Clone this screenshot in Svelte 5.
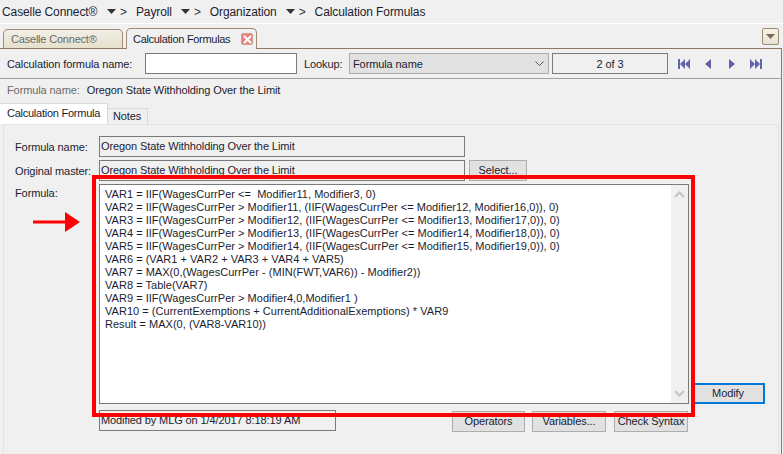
<script>
  const crumbs = ['Caselle Connect®', 'Payroll', 'Organization'];
  const formula = [
    'VAR1 = IIF(WagesCurrPer <=  Modifier11, Modifier3, 0)',
    'VAR2 = IIF(WagesCurrPer > Modifier11, (IIF(WagesCurrPer <= Modifier12, Modifier16,0)), 0)',
    'VAR3 = IIF(WagesCurrPer > Modifier12, (IIF(WagesCurrPer <= Modifier13, Modifier17,0)), 0)',
    'VAR4 = IIF(WagesCurrPer > Modifier13, (IIF(WagesCurrPer <= Modifier14, Modifier18,0)), 0)',
    'VAR5 = IIF(WagesCurrPer > Modifier14, (IIF(WagesCurrPer <= Modifier15, Modifier19,0)), 0)',
    'VAR6 = (VAR1 + VAR2 + VAR3 + VAR4 + VAR5)',
    'VAR7 = MAX(0,(WagesCurrPer - (MIN(FWT,VAR6)) - Modifier2))',
    'VAR8 = Table(VAR7)',
    'VAR9 = IIF(WagesCurrPer > Modifier4,0,Modifier1 )',
    'VAR10 = (CurrentExemptions + CurrentAdditionalExemptions) * VAR9',
    'Result = MAX(0, (VAR8-VAR10))'
  ];
</script>

<div class="app">
  <div class="crumbs">
    {#each crumbs as c}
      <span class="crumb">{c}</span>
      <svg class="drop" width="9" height="5" viewBox="0 0 9 5"><path d="M0 0h9L4.500 5z" fill="#333" /></svg>
      <span class="sep">&gt;</span>
    {/each}
    <span class="crumb">Calculation Formulas</span>
  </div>

  <div class="tabstrip">
    <div class="tab">Caselle Connect®</div>
    <div class="tab active">
      Calculation Formulas
      <span class="close">
        <svg width="9" height="9" viewBox="0 0 9 9"><path d="M1 1l7 7M8 1l-7 7" stroke="#fff" stroke-width="2" /></svg>
      </span>
    </div>
    <div class="tabmenu">
      <svg width="9" height="5" viewBox="0 0 9 5"><path d="M0 0h9L4.500 5z" fill="#7a6a58" /></svg>
    </div>
  </div>

  <div class="pane">
    <div class="toolbar">
      <span class="tb-label">Calculation formula name:</span>
      <div class="tb-input"></div>
      <span class="tb-lookup">Lookup:</span>
      <div class="select">
        Formula name
        <svg width="9" height="5" viewBox="0 0 9 5"><path d="M.5.500l4 4 4-4" fill="none" stroke="#555" /></svg>
      </div>
      <div class="count">2 of 3</div>
      <div class="nav">
        <svg width="12" height="10" viewBox="0 0 12 10"><path d="M0 0h2v10H0zM7 0v10L2 5zM12 0v10L7 5z" fill="#6464ac" /></svg>
        <svg class="prev" width="6" height="10" viewBox="0 0 6 10"><path d="M6 0v10L0 5z" fill="#6464ac" /></svg>
        <svg class="next" width="6" height="10" viewBox="0 0 6 10"><path d="M0 0v10l6-5z" fill="#6464ac" /></svg>
        <svg class="last" width="12" height="10" viewBox="0 0 12 10"><path d="M12 0h-2v10h2zM5 0v10l5-5zM0 0v10l5-5z" fill="#6464ac" /></svg>
      </div>
    </div>

    <div class="titleline"><span class="dim">Formula name:</span><span>Oregon State Withholding Over the Limit</span></div>

    <div class="subtabs">
      <div class="subtab active">Calculation Formula</div>
      <div class="subtab">Notes</div>
    </div>

    <div class="panel">
      <div class="row">
        <span class="label">Formula name:</span>
        <div class="field">Oregon State Withholding Over the Limit</div>
      </div>
      <div class="row second">
        <span class="label">Original master:</span>
        <div class="field">Oregon State Withholding Over the Limit</div>
        <div class="btn select-btn">Select...</div>
      </div>
      <div class="row formula-row">
        <span class="label formula-label">Formula:</span>
        <div class="formula">
          <div class="code">
            {#each formula as line}<div>{line}</div>{/each}
          </div>
          <div class="scroll">
            <svg width="11" height="7" viewBox="0 0 11 7"><path d="M1 6l4.500-4.500L10 6" fill="none" stroke="#c4c4c4" stroke-width="2" /></svg>
            <svg width="11" height="7" viewBox="0 0 11 7"><path d="M1 1l4.500 4.500L10 1" fill="none" stroke="#c4c4c4" stroke-width="2" /></svg>
          </div>
        </div>
        <div class="btn modify">Modify</div>
      </div>
      <div class="row bottom">
        <div class="field modified">Modified by MLG on 1/4/2017 8:18:19 AM</div>
        <div class="btn op">Operators</div>
        <div class="btn var">Variables...</div>
        <div class="btn chk">Check Syntax</div>
      </div>
    </div>
  </div>

  <!-- annotation drawn over the screenshot -->
  <div class="redbox"></div>
  <svg class="arrow" width="48" height="22" viewBox="0 0 48 22"><path d="M0 9.500h32V1l15 10-15 10v-8.500H0z" fill="#f00" /></svg>
</div>

<style>
  :global(body) {
    margin: 0;
    background: #f0f0f0;
  }

  .app {
    position: relative;
    width: 783px;
    height: 454px;
    overflow: hidden;
    background: #f0f0f0;
    font-family: 'Liberation Sans', Arial, sans-serif;
    font-size: 11px;
    letter-spacing: -0.1px;
    white-space: nowrap;
    color: #1c1c30;
  }

  .crumbs {
    display: flex;
    align-items: center;
    height: 23px;
    padding-left: 2px;
    border-bottom: 1px solid #fff;
    box-sizing: content-box;
    font-size: 12px;
    letter-spacing: -0.1px;
  }
  .crumb:nth-of-type(1) { width: 96px; }
  .drop { margin-left: 9px; flex: none; }
  .sep { margin: 0 9px 0 4px; color: #333; }

  .tabstrip {
    display: flex;
    align-items: flex-end;
    height: 24px;
    padding-left: 3px;
    box-sizing: border-box;
  }
  .tab {
    display: flex;
    align-items: center;
    height: 19px;
    width: 120px;
    padding-left: 7px;
    box-sizing: border-box;
    border: 1px solid #a08a78;
    border-bottom: 0;
    border-radius: 5px 5px 0 0;
    background: linear-gradient(#f2efe6, #e6e0cc);
    color: #6a6a6a;
    letter-spacing: -0.2px;
  }
  .tab.active {
    position: relative;
    top: 1px;
    height: 21px;
    width: 131px;
    margin-left: 3px;
    padding-left: 6px;
    background: #f0f0f0;
    color: #1c1c30;
    letter-spacing: -0.3px;
  }
  .close {
    display: flex;
    align-items: center;
    justify-content: center;
    width: 12px;
    height: 12px;
    margin-left: 11px;
    box-sizing: border-box;
    border: 1px solid #c9a090;
    border-radius: 2px;
    background: #f08080;
  }
  .tabmenu {
    display: flex;
    align-items: center;
    justify-content: center;
    width: 17px;
    height: 17px;
    box-sizing: border-box;
    margin: 0 4px 3px auto;
    border: 1px solid #a08a78;
    border-radius: 2px;
    background: linear-gradient(#f5f2e8, #e8e2d0);
  }

  .pane {
    height: 406px;
    margin-right: 1px;
    border-top: 1px solid #8f7667;
    border-right: 1px solid #8f7667;
    box-sizing: border-box;
  }

  .toolbar {
    display: flex;
    align-items: center;
    height: 29px;
    padding-left: 7px;
    border-bottom: 1px solid #a0a0a0;
    box-sizing: content-box;
  }
  .tb-label { width: 138px; flex: none; }
  .tb-input {
    width: 152px;
    height: 21px;
    box-sizing: border-box;
    border: 1px solid #7a7a7a;
    background: #fff;
  }
  .tb-lookup { width: 45px; margin-left: 7px; }
  .select {
    display: flex;
    align-items: center;
    justify-content: space-between;
    width: 200px;
    height: 21px;
    padding: 0 4px 0 3px;
    box-sizing: border-box;
    border: 1px solid #adadad;
    background: #e1e1e1;
  }
  .count {
    display: flex;
    align-items: center;
    justify-content: center;
    width: 116px;
    height: 21px;
    margin-left: 3px;
    box-sizing: border-box;
    border: 1px solid #7a7a7a;
  }
  .nav {
    display: flex;
    align-items: center;
    margin-left: 10px;
  }
  .prev { margin-left: 15px; }
  .next { margin-left: 18px; }
  .last { margin-left: 15px; }

  .titleline {
    display: flex;
    gap: 7px;
    align-items: center;
    height: 22px;
    padding-left: 7px;
  }
  .dim { color: #6a6a6a; }

  .subtabs {
    display: flex;
    align-items: flex-end;
    height: 23px;
  }
  .subtab {
    display: flex;
    align-items: center;
    height: 16px;
    padding: 0 6px 2px 5px;
    border: 1px solid #d9d9d9;
    border-bottom: 0;
    border-left: 0;
    box-sizing: border-box;
  }
  .subtab.active {
    height: 21px;
    width: 108px;
    padding-left: 7px;
    background: #fff;
    letter-spacing: -0.25px;
  }

  .panel {
    height: 331px;
    margin: 0 2px 0 3px;
    padding: 11px 0 0 11px;
    box-sizing: border-box;
    border-top: 1px solid #e3e3e3;
    border-left: 1px solid #e3e3e3;
    border-right: 1px solid #e3e3e3;
  }

  .row { display: flex; align-items: center; }
  .second { margin-top: 3px; }
  .label { width: 84px; flex: none; }
  .field {
    display: flex;
    align-items: center;
    width: 366px;
    height: 21px;
    padding: 0 0 1px 1px;
    box-sizing: border-box;
    border: 1px solid #7a7a7a;
  }
  .btn {
    display: flex;
    align-items: center;
    justify-content: center;
    height: 21px;
    padding-bottom: 1px;
    box-sizing: border-box;
    border: 1px solid #adadad;
    background: #e1e1e1;
  }
  .select-btn { width: 58px; margin-left: 4px; }

  .formula-row { align-items: flex-start; margin-top: 3px; }
  .formula-label { padding-top: 3px; }
  .formula {
    display: flex;
    width: 590px;
    height: 220px;
    box-sizing: border-box;
    border: 1px solid #7a7a7a;
    background: #fff;
  }
  .code {
    flex: 1;
    padding: 3px 0 0 5px;
    line-height: 13px;
    letter-spacing: 0.03px;
    white-space: pre;
  }
  .scroll {
    display: flex;
    flex-direction: column;
    justify-content: space-between;
    align-items: center;
    width: 17px;
    padding: 6px 0 6px;
    box-sizing: border-box;
    background: #f0f0f0;
  }
  .modify {
    align-self: flex-end;
    width: 74px;
    margin-left: 2px;
    border: 2px solid #0078d7;
  }

  .bottom { margin-top: 5px; padding-left: 84px; }
  .modified { width: 237px; }
  .op { width: 73px; margin-left: 116px; margin-top: 2px; }
  .var { width: 74px; margin-left: 7px; margin-top: 2px; }
  .chk { width: 74px; margin-left: 8px; margin-top: 2px; }

  .redbox {
    position: absolute;
    left: 92px;
    top: 175px;
    width: 603px;
    height: 242px;
    box-sizing: border-box;
    border: 4px solid #f00;
  }
  .arrow {
    position: absolute;
    left: 33px;
    top: 211px;
  }
</style>
